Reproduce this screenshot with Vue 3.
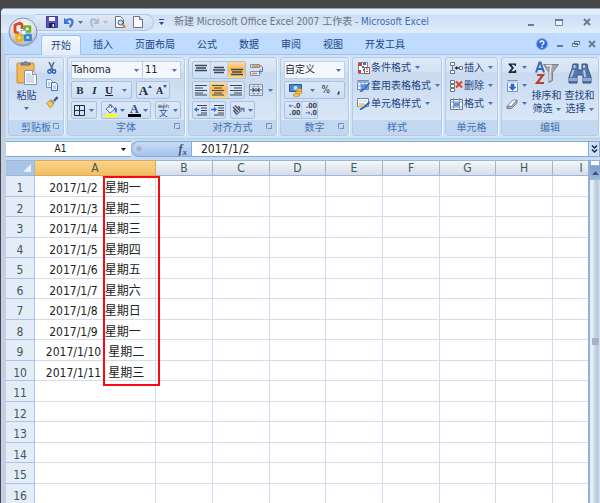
<script setup>
import { h, ref } from 'vue'

const Caret = () =>
  h('svg', { class: 'caret', viewBox: '0 0 5 3', width: 5, height: 3, 'aria-hidden': 'true' }, [
    h('path', { d: 'M0 0h5L2.5 3z', fill: 'currentColor' })
  ])

const tabs = ['开始', '插入', '页面布局', '公式', '数据', '审阅', '视图', '开发工具']
const activeTab = ref('开始')
const fontName = ref('Tahoma')
const fontSize = ref('11')
const numberFormat = ref('自定义')
const cellName = ref('A1')
const formula = ref('2017/1/2')

const columns = ['A', 'B', 'C', 'D', 'E', 'F', 'G', 'H', 'I']
const days = ['一', '二', '三', '四', '五', '六', '日', '一', '二', '三']
const rows = Array.from({ length: 16 }, (_, i) => ({
  n: i + 1,
  date: i < days.length ? `2017/1/${i + 2}` : '',
  day: i < days.length ? `星期${days[i]}` : ''
}))
</script>

<template>
  <div class="desktop">
    <main class="window">
      <button class="office" aria-label="Office">
        <svg viewBox="0 0 30 30" width="30" height="30">
          <defs>
            <radialGradient id="orb" cx="50%" cy="35%" r="65%">
              <stop offset="0" stop-color="#ffffff" />
              <stop offset=".65" stop-color="#dde1e8" />
              <stop offset="1" stop-color="#9ba6b8" />
            </radialGradient>
          </defs>
          <circle cx="15" cy="15" r="14" fill="url(#orb)" stroke="#8796ae" />
          <path d="M4 15a11 11 0 0 0 22 0" fill="#c9d0dc" opacity=".5" />
          <path d="M14 12V7.500l-2-1.500-5 2v7l2 1 2-.5" fill="none" stroke="#e0481c" stroke-width="2.800" stroke-linejoin="round" />
          <path d="M16.500 9.500h5.500v5h-5.500z" fill="none" stroke="#6fb02c" stroke-width="2.600" stroke-linejoin="round" />
          <path d="M8.500 18h5.500v5.500H8.500z" fill="none" stroke="#f2b11c" stroke-width="2.800" stroke-linejoin="round" />
          <path d="M17 18h5.500v5H17z" fill="none" stroke="#2f86c8" stroke-width="2.600" stroke-linejoin="round" />
          <path d="M13 13.500h5v4h-5z" fill="#f4f8fc" stroke="#7fb6dc" />
        </svg>
      </button>

      <header class="titlebar">
        <div class="qat">
          <button aria-label="保存">
            <svg viewBox="0 0 12 12" width="12" height="12">
              <path d="M.5.5h11v11h-11z" fill="#5a55c0" stroke="#3d3a98" />
              <path d="M3 1h6v4H3z" fill="#f2f4ff" />
              <path d="M3 7h6v4.500H3z" fill="#23234f" />
              <path d="M6.500 8H8v3H6.500z" fill="#e8ecff" />
            </svg>
          </button>
          <button aria-label="撤消">
            <svg viewBox="0 0 12 12" width="12" height="12">
              <path d="M4 5C6 2.500 10.500 2.500 10.500 6c0 2-1 3.500-3 5" fill="none" stroke="#3d74d6" stroke-width="2.200" />
              <path d="M2 1.500v6.500h6z" fill="#3d74d6" />
            </svg>
          </button>
          <Caret />
          <button aria-label="恢复">
            <svg viewBox="0 0 12 12" width="12" height="12">
              <path d="M9.500 5C7.500 2.500 4 2.500 4 6c0 2 .5 3.500 2 5" fill="none" stroke="#aebbd0" stroke-width="2" />
              <path d="M12 1.500V8H6z" fill="#aebbd0" />
            </svg>
          </button>
          <Caret class="dim" />
          <button class="doc" aria-label="打印预览">
            <svg viewBox="0 0 12 12" width="12" height="12">
              <path d="M1.500.5h5l3 3v8h-8z" fill="#fff" stroke="#66738c" />
              <circle cx="6.500" cy="6.500" r="2.500" fill="#c7e1f2" stroke="#46566e" />
              <path d="M8.500 8.500l3 3" stroke="#d68a2a" stroke-width="2" />
            </svg>
          </button>
          <button class="doc" aria-label="新建">
            <svg viewBox="0 0 12 12" width="12" height="12">
              <path d="M1.500.5h6l3 3v8h-9z" fill="#fff" stroke="#66738c" />
              <path d="M7.500.5v3h3" fill="#dce5f2" stroke="#66738c" />
            </svg>
          </button>
        </div>
        <button class="customize" aria-label="自定义快速访问工具栏">
          <svg viewBox="0 0 5 6" width="5" height="6"><path d="M0 0h5v1H0zM0 3h5L2.500 6z" fill="#2b4f8c" /></svg>
        </button>
        <h1>新建 Microsoft Office Excel 2007 工作表 - <span>Microsoft Excel</span></h1>
        <div class="sys">
          <button aria-label="最小化"><svg viewBox="0 0 8 8" width="8" height="8"><path d="M1 6h6v2H1z" fill="#6d7b90" /></svg></button>
          <button aria-label="最大化"><svg viewBox="0 0 8 8" width="8" height="8"><path d="M.5 1.500h7v6h-7z" fill="#eef4fc" stroke="#7d8ba0" /><path d="M0 1h8v2H0z" fill="#6d7b90" /></svg></button>
          <button aria-label="关闭"><svg viewBox="0 0 8 8" width="8" height="8"><path d="M1 1l6 6M7 1L1 7" stroke="#6d7b90" stroke-width="2" /></svg></button>
        </div>
      </header>

      <nav class="tabs">
        <button v-for="t in tabs" :key="t" :class="{ active: t === activeTab }" @click="activeTab = t">{{ t }}</button>
        <div class="docsys">
          <button aria-label="帮助">
            <svg viewBox="0 0 12 12" width="12" height="12">
              <circle cx="6" cy="6" r="5.500" fill="#2d67d8" stroke="#7fa6e6" />
              <path d="M4 4.800C4 2.500 8 2.500 8 4.700 8 6 6 6 6 7.500M6 8.500V10" fill="none" stroke="#fff" stroke-width="1.400" />
            </svg>
          </button>
          <button aria-label="最小化窗口"><svg viewBox="0 0 8 8" width="8" height="8"><path d="M1 5h6v2H1z" fill="#6d7b90" /></svg></button>
          <button aria-label="还原窗口"><svg viewBox="0 0 8 8" width="8" height="8"><path d="M2.500 1.500h5v3h-5zM.5 3.500h5v3h-5z" fill="#eef4fc" stroke="#6d7b90" /><path d="M2 1h6v1H2zM0 3h6v1H0z" fill="#56647a" /></svg></button>
          <button aria-label="关闭窗口"><svg viewBox="0 0 8 8" width="8" height="8"><path d="M1 1l6 6M7 1L1 7" stroke="#6d7b90" stroke-width="2" /></svg></button>
        </div>
      </nav>

      <section class="ribbon">
        <section class="group clipboard">
          <div class="body">
            <button class="big">
              <svg viewBox="0 0 22 24" width="22" height="24">
                <rect x="1" y="2" width="17" height="20" rx="1" fill="#f0b95a" stroke="#c68b33" />
                <path d="M5 4V2h3c0-2 3-2 3 0h3v2z" fill="#7f93b5" stroke="#5c6f93" />
                <path d="M8.500 9.500h8l4 4v10h-12z" fill="#fff" stroke="#8092ad" />
                <path d="M16.500 9.500v4h4" fill="#dfe8f4" stroke="#8092ad" />
                <path d="M10 13h5M10 15h8M10 17h8M10 19h8M10 21h8" stroke="#a9bcd8" />
              </svg>
              <span>粘贴</span>
              <Caret />
            </button>
            <div class="side">
              <button aria-label="剪切">
                <svg viewBox="0 0 12 12" width="12" height="12">
                  <path d="M3 0l4 8M8 0L4.500 8" stroke="#53688f" stroke-width="1.500" />
                  <circle cx="3.500" cy="9.500" r="1.700" fill="none" stroke="#2d5fc0" stroke-width="1.400" />
                  <circle cx="8" cy="9.500" r="1.700" fill="none" stroke="#2d5fc0" stroke-width="1.400" />
                </svg>
              </button>
              <button aria-label="复制">
                <svg viewBox="0 0 12 12" width="12" height="12">
                  <path d="M.5.5h4l2 2v6h-6z" fill="#f5faff" stroke="#6a8fd0" />
                  <path d="M5.500 3.500h4l2 2v6h-6z" fill="#f5faff" stroke="#3f6cc0" />
                  <path d="M7 7h3M7 9h3M2 4h2M2 6h2" stroke="#7fa3de" />
                </svg>
              </button>
              <button aria-label="格式刷">
                <svg viewBox="0 0 12 12" width="12" height="12">
                  <path d="M11.500 1L8 5" stroke="#5b4a86" stroke-width="2.400" />
                  <path d="M5 3l4 4-2 1-3-3z" fill="#8b97a8" />
                  <path d="M4 4.500L7.500 8 4.500 12 .5 7z" fill="#f0cf4a" stroke="#b08e26" stroke-width=".8" />
                </svg>
              </button>
            </div>
          </div>
          <footer>剪贴板<i class="launch"></i></footer>
        </section>

        <section class="group font">
          <div class="body stack">
            <div class="line joined">
              <label class="pick grow"><select v-model="fontName" aria-label="字体"><option>Tahoma</option></select><Caret /></label>
              <label class="pick size"><select v-model="fontSize" aria-label="字号"><option>11</option></select><Caret /></label>
            </div>
            <div class="line">
              <div class="set w61">
                <button class="b">B</button><button class="i">I</button><button class="u">U</button><Caret />
              </div>
              <div class="set w34">
                <button class="big-a">A<svg viewBox="0 0 4 3" width="4" height="3"><path d="M0 3h4L2 0z" fill="#2b56a8" /></svg></button>
                <button class="small-a">A<svg viewBox="0 0 4 3" width="4" height="3"><path d="M0 0h4L2 3z" fill="#2b56a8" /></svg></button>
              </div>
            </div>
            <div class="line">
              <div class="set w27">
                <button aria-label="边框"><svg viewBox="0 0 11 11" width="11" height="11"><path d="M.5.5h10v10H.5zM5.500 0v11M0 5.500h11" fill="none" stroke="#1f2a3c" /></svg></button><Caret />
              </div>
              <div class="set w51">
                <button aria-label="填充颜色">
                  <svg viewBox="0 0 14 13" width="14" height="13">
                    <path d="M2 5l5-4 4 4-5 4z" fill="#e7eef8" stroke="#5b7398" />
                    <path d="M5 4V1.500C5-.2 7.500-.2 7.500 1.500V4" fill="none" stroke="#5b7398" />
                    <path d="M11 3c2.500 1 2.500 4 1 6-1.500-1-1.500-3-1-6z" fill="#3b6fc8" />
                    <path d="M1 10h12v3H1z" fill="#ffff00" />
                  </svg>
                </button><Caret />
                <button aria-label="字体颜色" class="color-a">A</button><Caret />
              </div>
              <div class="set w27">
                <button class="pinyin" aria-label="拼音指南"><small>wén</small><span>文</span></button><Caret />
              </div>
            </div>
          </div>
          <footer>字体<i class="launch"></i></footer>
        </section>

        <section class="group align">
          <div class="body stack">
            <div class="line">
              <div class="set w54 thirds">
                <button aria-label="顶端对齐"><svg viewBox="0 0 12 12" width="12" height="12"><path d="M0 1.500h12M1 4h10M0 6.500h12" stroke="#3c4758" stroke-width="1.500" /></svg></button>
                <button aria-label="垂直居中"><svg viewBox="0 0 12 12" width="12" height="12"><path d="M1 3.500h10M0 6h12M1 8.500h10" stroke="#3c4758" stroke-width="1.500" /></svg></button>
                <button class="on" aria-label="底端对齐"><svg viewBox="0 0 12 12" width="12" height="12"><path d="M0 5.500h12M1 8h10M0 10.500h12" stroke="#3c4758" stroke-width="1.500" /></svg></button>
              </div>
              <button class="bare" aria-label="自动换行">
                <svg viewBox="0 0 14 14" width="14" height="14">
                  <path d="M.5 1.500h9v3h-9zM.5 8.500h9v4h-9z" fill="#dfe9f6" stroke="#7e92b0" />
                  <path d="M2 3h10M2 10.500h5" stroke="#e0862c" stroke-width="1.400" />
                  <path d="M12.500 4v4.500H9M11 6.500L9 8.500l2 2" fill="none" stroke="#4f79bd" />
                </svg>
              </button>
            </div>
            <div class="line">
              <div class="set w54 thirds">
                <button aria-label="左对齐"><svg viewBox="0 0 12 12" width="12" height="12"><path d="M0 1.500h12M0 4h8M0 6.500h12M0 9h8M0 11h12" stroke="#3c4758" stroke-width="1.200" /></svg></button>
                <button class="on" aria-label="居中"><svg viewBox="0 0 12 12" width="12" height="12"><path d="M0 1.500h12M2 4h8M0 6.500h12M2 9h8M0 11h12" stroke="#3c4758" stroke-width="1.200" /></svg></button>
                <button aria-label="右对齐"><svg viewBox="0 0 12 12" width="12" height="12"><path d="M0 1.500h12M4 4h8M0 6.500h12M4 9h8M0 11h12" stroke="#3c4758" stroke-width="1.200" /></svg></button>
              </div>
              <button class="bare" aria-label="合并后居中">
                <svg viewBox="0 0 14 12" width="14" height="12">
                  <path d="M.5.5h13v11H.5zM0 3h14M0 9h14M5 0v3M9 0v3M5 9v3M9 9v3" fill="#eef4fc" stroke="#7d90ae" />
                  <path d="M1 3.500h12v5H1z" fill="#fff" />
                  <path d="M1 6h4M9 6h4M3.500 4L5.500 6 3.500 8M10.500 4L8.500 6l2 2M7 4v4" fill="none" stroke="#33466a" stroke-width="1.200" />
                </svg>
                <Caret />
              </button>
            </div>
            <div class="line">
              <div class="set w34 thirds">
                <button aria-label="减少缩进量"><svg viewBox="0 0 13 12" width="13" height="12"><path d="M3 1.500h10M7 4h6M7 6.500h6M7 9h6M3 11h10" stroke="#3c4758" stroke-width="1.200" /><path d="M5 5.500H2" stroke="#2d6bd2" stroke-width="1.600" /><path d="M0 5.500L3 3v5z" fill="#2d6bd2" /></svg></button>
                <button aria-label="增加缩进量"><svg viewBox="0 0 13 12" width="13" height="12"><path d="M3 1.500h10M7 4h6M7 6.500h6M7 9h6M3 11h10" stroke="#3c4758" stroke-width="1.200" /><path d="M0 5.500h3" stroke="#2d6bd2" stroke-width="1.600" /><path d="M6 5.500L3 3v5z" fill="#2d6bd2" /></svg></button>
              </div>
              <div class="set w25">
                <button aria-label="方向"><svg viewBox="0 0 13 12" width="13" height="12"><path d="M1 3l5 5M3 1.500l5 5M1.500 6l3 4M6.500 2l2 3" stroke="#3c4758" stroke-width="1.300" /><path d="M4 11l7-6M8.500 4.500H12V8" fill="none" stroke="#6c7f9e" stroke-width="1.300" /></svg></button><Caret />
              </div>
            </div>
          </div>
          <footer>对齐方式<i class="launch"></i></footer>
        </section>

        <section class="group number">
          <div class="body stack">
            <div class="line joined">
              <label class="pick grow"><select v-model="numberFormat" aria-label="数字格式"><option>自定义</option></select><Caret /></label>
            </div>
            <div class="line">
              <div class="set grow">
                <button aria-label="会计数字格式">
                  <svg viewBox="0 0 14 13" width="14" height="13">
                    <path d="M.5.5h12v7H.5z" fill="#4c86d8" stroke="#2e559c" />
                    <circle cx="6.500" cy="4" r="2" fill="#cfe2f8" />
                    <ellipse cx="10" cy="6" rx="3" ry="1.500" fill="#f2c65a" stroke="#b8862a" stroke-width=".7" />
                    <ellipse cx="10" cy="8.500" rx="3" ry="1.500" fill="#f2c65a" stroke="#b8862a" stroke-width=".7" />
                    <ellipse cx="7.500" cy="11" rx="3.500" ry="1.500" fill="#f2c65a" stroke="#b8862a" stroke-width=".7" />
                  </svg>
                </button><Caret />
                <button class="sym">%</button><button class="sym comma">,</button>
              </div>
            </div>
            <div class="line">
              <div class="set w34 thirds">
                <button class="dec" aria-label="增加小数位数"><span><b>←</b>.0</span><span>.00</span></button>
                <button class="dec" aria-label="减少小数位数"><span>.00</span><span><b>→</b>.0</span></button>
              </div>
            </div>
          </div>
          <footer>数字<i class="launch"></i></footer>
        </section>

        <section class="group styles">
          <div class="body list">
            <button>
              <svg viewBox="0 0 13 12" width="13" height="12"><path d="M1.500.5h9v11h-9z" fill="#fff" stroke="#6f86ab" /><path d="M1 1h4v3H1zM1 8h3v3H1z" fill="#d9402c" /><path d="M6 2h3M5 5h2M6 8h2" stroke="#3d6cc0" stroke-width="2" /><path d="M7.500 5.500h5v6h-5z" fill="#fff" stroke="#8a5a50" /><path d="M9 7h2M9 9.500h2" stroke="#d9402c" /></svg>
              条件格式<Caret />
            </button>
            <button>
              <svg viewBox="0 0 13 12" width="13" height="12"><path d="M.5.5h11v9H.5z" fill="#fff" stroke="#6f86ab" /><path d="M0 1h12v2H0z" fill="#8fb0e4" /><path d="M4 0v10M8 0v10M0 6h12" stroke="#7f9cd0" /><path d="M4 4h7v5H4z" fill="#4a84dc" opacity=".8" /><path d="M12.500 3L7 9l-4 3" stroke="#3e6bb8" stroke-width="1.800" fill="none" /></svg>
              套用表格格式<Caret />
            </button>
            <button>
              <svg viewBox="0 0 13 12" width="13" height="12"><path d="M.5.5h11v8H.5z" fill="#fff" stroke="#6f86ab" /><path d="M2 3h8M2 5.500h5" stroke="#b9c9e2" /><path d="M2 6h7v3H2z" fill="#f0d060" /><path d="M12.500 4L8 8.500 3 11.500" stroke="#2f66cc" stroke-width="2" fill="none" /></svg>
              单元格样式<Caret />
            </button>
          </div>
          <footer>样式</footer>
        </section>

        <section class="group cells">
          <div class="body list">
            <button>
              <svg viewBox="0 0 13 12" width="13" height="12"><path d="M.5.5h4v3h-4zM.5 8.500h4v3h-4zM9.500 4.500h3v3h-3z" fill="#fff" stroke="#64748e" /><path d="M2.500 4v4" stroke="#64748e" /><path d="M9 6H6" stroke="#1f2a3c" stroke-width="1.400" /><path d="M4.500 6L7 4v4z" fill="#1f2a3c" /></svg>
              插入<Caret />
            </button>
            <button>
              <svg viewBox="0 0 13 12" width="13" height="12"><path d="M.5.5h4v3h-4zM.5 8.500h4v3h-4zM.5 4.500h4v3h-4z" fill="#fff" stroke="#64748e" /><path d="M6 1.500l6 6M12 1.500l-6 6" stroke="#e0402a" stroke-width="2" /></svg>
              删除<Caret />
            </button>
            <button>
              <svg viewBox="0 0 13 12" width="13" height="12"><path d="M.5 1.500h12v10H.5z" fill="#fff" stroke="#64748e" /><path d="M3.500 0v12M9.500 0v12M0 4h13M0 9h13" stroke="#8698b5" /><path d="M4 4.500h5v4H4z" fill="#5c93e4" /></svg>
              格式<Caret />
            </button>
          </div>
          <footer>单元格</footer>
        </section>

        <section class="group edit">
          <div class="body">
            <div class="list tools">
              <button aria-label="自动求和"><svg viewBox="0 0 12 12" width="12" height="12"><path d="M2.500 1.500h7.500V4H9l-.8-1.200H5.500L8 6 5.200 9.200h3L9.200 8h1v3H2.500v-1L5.700 6 2.500 2.500z" fill="#1b2536" /></svg><Caret /></button>
              <button aria-label="填充"><svg viewBox="0 0 12 12" width="12" height="12"><path d="M1.500.5h10v11h-10z" fill="#eef5ff" stroke="#7d93b6" /><path d="M1 1h11v2H1z" fill="#bfd2ee" /><path d="M5 4h3v3h2l-3.500 3.500L3 7h2z" fill="#2d66d4" stroke="#2d66d4" stroke-width=".6" /></svg><Caret /></button>
              <button aria-label="清除"><svg viewBox="0 0 12 12" width="12" height="12"><path d="M1 8l6-6h4L5.500 8.500z" fill="#fff" stroke="#8290a6" /><path d="M1 8v2.500h4.500L11 5V2L5.500 8.500z" fill="#b4c0d2" stroke="#6d7c94" /></svg><Caret /></button>
            </div>
            <button class="big wide">
              <svg viewBox="0 0 24 24" width="24" height="24">
                <path d="M8.500 3.500h15l-6 8v8l-3.500 2v-10z" fill="#a2a6ac" stroke="#7c8086" />
                <path d="M11 4.500h5l-1 7v8" fill="none" stroke="#e4e6ea" stroke-width="1.500" />
                <path d="M1 11.500L4.500 1.500h1L9 11.500M3 8h4.500" fill="none" stroke="#3a66b4" stroke-width="2" />
                <path d="M2 14h6L2 22h7" fill="none" stroke="#b8402e" stroke-width="2.200" />
              </svg>
              <span>排序和</span>
              <span class="row">筛选<Caret /></span>
            </button>
            <button class="big wide">
              <svg viewBox="0 0 24 24" width="24" height="24">
                <path d="M5 3h5v6h4V3h5l1 5 3 8v6h-8v-8h-6v8H1v-6l3-8z" fill="#5675a8" stroke="#38537f" />
                <path d="M5.500 9L3 16M16 9l1 7M6.500 4v3M16 4v3" stroke="#b7cbe8" stroke-width="2" />
                <path d="M1 17h8v3H1zM15 17h8v3h-8z" fill="#8eaad4" />
              </svg>
              <span>查找和</span>
              <span class="row">选择<Caret /></span>
            </button>
          </div>
          <footer>编辑</footer>
        </section>
      </section>

      <section class="formula-bar">
        <label class="namebox"><input v-model="cellName" aria-label="名称框" /><Caret /></label>
        <div class="fx"><i class="knob"></i><button aria-label="插入函数">f<sub>x</sub></button></div>
        <input class="formula" v-model="formula" aria-label="编辑栏" />
        <button class="expand" aria-label="展开编辑栏">
          <svg viewBox="0 0 7 8" width="7" height="8"><path d="M1 .5l2.500 2.500L6 .5M1 4.500L3.500 7 6 4.500" fill="none" stroke="#1b2b4a" stroke-width="1.500" /></svg>
        </button>
      </section>

      <section class="sheet">
        <div class="grid">
          <table>
            <colgroup><col class="c-head" /><col class="c-a" /><col class="c" /><col class="c" /><col class="c-n" /><col class="c" /><col class="c" /><col class="c-n" /><col class="c" /><col class="c" /></colgroup>
            <thead>
              <tr>
                <th class="corner"><svg viewBox="0 0 8 8" width="8" height="8"><path d="M8 0v8H0z" fill="#e9f1fb" /></svg></th>
                <th v-for="c in columns" :key="c" scope="col" :class="{ sel: c === 'A' }">{{ c }}</th>
              </tr>
            </thead>
            <tbody>
              <tr v-for="r in rows" :key="r.n">
                <th scope="row">{{ r.n }}</th>
                <td class="data"><div v-if="r.date"><span>{{ r.date }}</span><span class="day">{{ r.day }}</span></div></td>
                <td v-for="c in 8" :key="c"></td>
              </tr>
            </tbody>
          </table>
          <div class="marker"></div>
        </div>
        <div class="scroll">
          <i class="split"></i>
          <button aria-label="向上滚动"><svg viewBox="0 0 7 4" width="7" height="4"><path d="M0 4h7L3.500 0z" fill="#3c5680" /></svg></button>
          <div class="thumb"><i></i></div>
        </div>
      </section>
    </main>
  </div>
</template>

<style>
body {
  margin: 0;
  background: #474747;
}
</style>

<style scoped>
* {
  box-sizing: border-box;
}
.desktop {
  height: 100vh;
  padding: 8px 0 0 1px;
  overflow: hidden;
  background: #474747;
  font-family: "DejaVu Sans Condensed", "Noto Sans CJK SC", sans-serif;
  font-size: 10px;
  line-height: 12px;
  color: #1e4584;
}
.window {
  position: relative;
  display: flex;
  flex-direction: column;
  height: 100%;
  padding-left: 4px;
  border-radius: 4px 0 0 0;
  border-top: 1px solid #7fa8d8;
  background: #c3cfe2;
}
button,
input,
select {
  margin: 0;
  padding: 0;
  border: 0;
  background: none;
  font: inherit;
  color: inherit;
}
button {
  display: flex;
  align-items: center;
  justify-content: center;
}
svg {
  display: block;
  flex: none;
}
.caret {
  color: #4a74b4;
}
.caret.dim {
  color: #c8b8a8;
}

/* title bar */
.office {
  position: absolute;
  left: 7px;
  top: 8px;
  z-index: 2;
}
.titlebar {
  display: flex;
  align-items: center;
  height: 24px;
  flex: none;
  margin-left: -4px;
  padding: 2px 9px 0 34px;
  border-radius: 4px 0 0 0;
  background: linear-gradient(#e6effa 0, #e2ecf9 5px, #cfdff4 6px, #d6e5f8 16px, #e3eefb 100%);
}
.qat {
  display: flex;
  align-items: center;
  gap: 4px;
  height: 17px;
  padding: 0 9px 0 11px;
  border: 1px solid #b4c8e4;
  border-left: 0;
  border-radius: 0 9px 9px 0;
  background: linear-gradient(#dfe9f7, #cddcf0);
}
.qat .doc {
  margin-left: 2px;
}
.customize {
  margin-left: 5px;
}
.titlebar h1 {
  flex: 1;
  margin: 0 0 0 10px;
  font-size: 10px;
  font-weight: 400;
  color: #6c7580;
  white-space: nowrap;
}
.titlebar h1 span {
  color: #3e6db0;
}
.sys {
  display: flex;
  gap: 20px;
}

/* tabs */
.tabs {
  display: flex;
  align-items: flex-end;
  height: 22px;
  flex: none;
  margin-left: -1px;
  padding: 0 4px 0 35px;
  background: #bfdbff;
  border-bottom: 1px solid #9fc0ea;
}
.tabs > button {
  height: 19px;
  padding: 0 11px;
  white-space: nowrap;
}
.tabs > button.active {
  margin: 0 1px -1px 2px;
  padding: 0 9px;
  height: 20px;
  border: 1px solid #9fc0ea;
  border-bottom: 0;
  border-radius: 3px 3px 0 0;
  background: linear-gradient(#f4f8fe, #e2ecf9);
  color: #1e4584;
}
.docsys {
  display: flex;
  align-items: center;
  gap: 8px;
  height: 21px;
  margin-left: auto;
}

/* ribbon */
.ribbon {
  display: flex;
  flex: none;
  gap: 3px;
  height: 84px;
  margin-left: 1px;
  padding: 2px 1px 2px 2px;
  background: #d3e3f6;
  border-bottom: 1px solid #a6d3dc;
}
.group {
  display: flex;
  flex-direction: column;
  flex: none;
  border: 1px solid #b3cbe6;
  border-radius: 3px;
  background: linear-gradient(#dfeaf7 0, #d3e1f3 14px, #c9daef 15px, #d9e7f7 62px);
  box-shadow: 1px 0 0 #eef5fd;
  overflow: hidden;
}
.clipboard { width: 56px; }
.font { width: 118px; }
.align { width: 89px; }
.number { width: 69px; }
.styles { width: 90px; }
.cells { width: 53px; }
.edit { flex: 1; }
.group footer {
  display: flex;
  position: relative;
  align-items: center;
  justify-content: center;
  height: 15px;
  flex: none;
  background: #c1d8f0;
  color: #4470b0;
}
.launch {
  position: absolute;
  right: 4px;
  top: 3px;
  width: 6px;
  height: 6px;
  border-left: 1px solid #6f90c0;
  border-top: 1px solid #6f90c0;
}
.launch::after {
  content: "";
  position: absolute;
  right: 0;
  bottom: 0;
  width: 3px;
  height: 3px;
  border-right: 1px solid #6f90c0;
  border-bottom: 1px solid #6f90c0;
}
.body {
  display: flex;
  flex: 1;
  padding-top: 3px;
}
.stack {
  flex-direction: column;
  gap: 2px;
  padding: 3px 3px 0;
}
.line {
  display: flex;
  gap: 4px;
  height: 18px;
  align-items: stretch;
}
.line.joined {
  gap: 0;
}
.big {
  flex-direction: column;
  justify-content: flex-start;
  align-self: flex-start;
  width: 35px;
}
.clipboard .big {
  gap: 5px;
}
.big .row {
  display: flex;
  align-items: center;
  gap: 3px;
  margin-top: 1px;
}
.side {
  display: flex;
  flex-direction: column;
  gap: 5px;
  padding: 1px 0 0 2px;
}
.side button {
  width: 12px;
  height: 12px;
}
.wide {
  width: 33px;
}
.wide > svg {
  margin-bottom: 5px;
}
.pick {
  display: grid;
  align-items: center;
  background: #f4f8fe;
  border: 1px solid #bcd0ea;
}
.pick select {
  grid-area: 1 / 1;
  width: 100%;
  height: 16px;
  appearance: none;
  color: #22272e;
}
.font .pick select {
  font-family: "DejaVu Sans", sans-serif;
}
.pick .caret {
  grid-area: 1 / 1;
  justify-self: end;
  margin-right: 3px;
  pointer-events: none;
}
.grow {
  flex: 1;
}
.size {
  width: 38px;
  border-left: 0;
  padding-left: 2px;
}
.set {
  display: flex;
  align-items: center;
  justify-content: space-around;
  border: 1px solid #a9c2e3;
  border-radius: 2px;
  background: linear-gradient(#dce8f7, #cddff4);
}
.set button {
  height: 100%;
}
.thirds button {
  flex: 1;
}
.thirds button + button {
  border-left: 1px solid #bcd0ea;
}
.w61 { width: 61px; }
.w54 { width: 54px; }
.w51 { width: 51px; }
.w34 { width: 34px; }
.w27 { width: 27px; }
.w25 { width: 25px; }
.on {
  background: linear-gradient(#fbdb9f, #f9b64c 50%, #fdd97c);
}
.bare {
  gap: 5px;
}
.b,
.i,
.u,
.big-a,
.small-a,
.color-a {
  font-family: "Liberation Serif", serif;
  color: #1f2a3c;
}
.b,
.i,
.u {
  font-size: 11px;
  font-weight: 700;
}
.i {
  font-style: italic;
}
.u {
  text-decoration: underline;
}
.big-a,
.small-a {
  align-items: flex-start;
  padding-top: 3px;
  font-size: 13px;
  font-weight: 700;
}
.small-a {
  font-size: 10px;
}
.color-a {
  font-size: 12px;
  font-weight: 700;
  line-height: 10px;
  color: #2c4c86;
}
.set .color-a {
  width: 13px;
  height: 13px;
  border-bottom: 3px solid #000;
}
.pinyin {
  flex-direction: column;
  font-size: 9px;
  line-height: 9px;
  color: #2b56a8;
}
.pinyin small {
  font-size: 6px;
  line-height: 7px;
  color: #1f2a3c;
}
.sym {
  color: #1f2a3c;
}
.comma {
  font-weight: 700;
}
.dec {
  flex-direction: column;
  align-items: flex-end;
  font-size: 7px;
  line-height: 7px;
  font-weight: 700;
  color: #3a4454;
}
.dec span {
  display: block;
}
.dec b {
  color: #2d66d4;
}
.list {
  display: flex;
  flex-direction: column;
  gap: 5px;
  padding: 3px 0 0 4px;
}
.list button {
  justify-content: flex-start;
  gap: 1px;
  height: 13px;
  white-space: nowrap;
}
.list .caret {
  margin-left: 3px;
}
.edit .body {
  padding-top: 3px;
}
.tools {
  width: 28px;
  padding-top: 0;
}

/* formula bar */
.formula-bar {
  display: flex;
  flex: none;
  height: 21px;
  margin-left: 1px;
  padding: 2px 0 3px;
  background: #c6dbf5;
  font-size: 12px;
  color: #222;
}
.formula-bar > * {
  border-top: 1px solid #86a9d6;
  border-bottom: 1px solid #86a9d6;
}
.namebox {
  display: flex;
  align-items: center;
  width: 125px;
  padding-right: 5px;
  background: #fff;
}
.namebox input {
  flex: 1;
  min-width: 0;
  padding-right: 6px;
  text-align: center;
  font-size: 10px;
}
.namebox .caret {
  color: #111;
}
.fx {
  display: flex;
  align-items: center;
  justify-content: space-between;
  width: 60px;
  padding: 0 4px 0 3px;
  border-radius: 8px 0 0 8px;
  border-left: 1px solid #86a9d6;
  background: linear-gradient(#c9dcf6, #a5c3ea);
}
.knob {
  width: 8px;
  height: 8px;
  border-radius: 4px;
  background: radial-gradient(#8fa4c2, #d7e4f6);
}
.fx button {
  font: italic 700 12px/12px "Liberation Serif", serif;
  color: #3f5474;
}
.fx sub {
  font-size: 9px;
  line-height: 6px;
  align-self: flex-end;
}
.formula {
  flex: 1;
  min-width: 0;
  padding-left: 9px;
  background: #fff;
  border-left: 1px solid #86a9d6;
}
.expand {
  width: 12px;
  border: 1px solid #86a9d6;
  background: #cfe1f8;
}

/* sheet */
.sheet {
  display: flex;
  flex: 1;
  min-height: 0;
  margin-left: 1px;
}
.grid {
  position: relative;
  flex: 1;
  min-width: 0;
  overflow: hidden;
  background: #fff;
}
table {
  width: 547px;
  table-layout: fixed;
  border-collapse: separate;
  border-spacing: 0;
  font-size: 12px;
  line-height: 14px;
}
.c-head { width: 29px; }
.c-a { width: 121px; }
.c { width: 57px; }
.c-n { width: 56px; }
th,
td {
  padding: 0;
  border: solid #d3dcec;
  border-width: 0 1px 1px 0;
  overflow: hidden;
  white-space: nowrap;
}
th {
  font-weight: 400;
  color: #3c5a5a;
}
thead tr {
  height: 16px;
}
thead th {
  border-color: #9eb6ce;
  border-top: 1px solid #9eb6ce;
  background: linear-gradient(#f4f7fb, #d5dde9);
}
thead .corner {
  background: #a9c4e9;
}
.corner svg {
  margin-left: auto;
  margin-right: 3px;
}
thead .sel {
  background: linear-gradient(#f8d48c, #f1bf62);
  border-color: #e2a94c;
}
tbody tr {
  height: 20px;
}
tbody tr:nth-child(odd) {
  height: 21px;
}
tbody th {
  padding-top: 4px;
  background: #e4ecf7;
  border-color: #a9c6e8;
}
.data {
  padding-top: 4px;
  color: #222;
}
.data div {
  display: flex;
  justify-content: center;
  gap: 7px;
}
.marker {
  position: absolute;
  left: 97px;
  top: 16px;
  width: 57px;
  height: 210px;
  border: 2px solid #f80a10;
}
.scroll {
  display: flex;
  flex-direction: column;
  width: 12px;
  border-left: 2px solid #8eb0dc;
  background: #c9d9ec;
}
.split {
  height: 6px;
  border: 1px solid #8eb0dc;
  background: #fff;
}
.scroll button {
  height: 14px;
  background: linear-gradient(#7d9ecb, #9dbadf);
}
.thumb {
  display: flex;
  flex: 1;
  align-items: center;
  justify-content: center;
  background: linear-gradient(90deg, #e8edf3 30%, #c3d1e3 50%, #b9cbe2 80%, #dce7f4);
}
.thumb i {
  width: 7px;
  height: 7px;
  background: #a9b2bf;
}
</style>
